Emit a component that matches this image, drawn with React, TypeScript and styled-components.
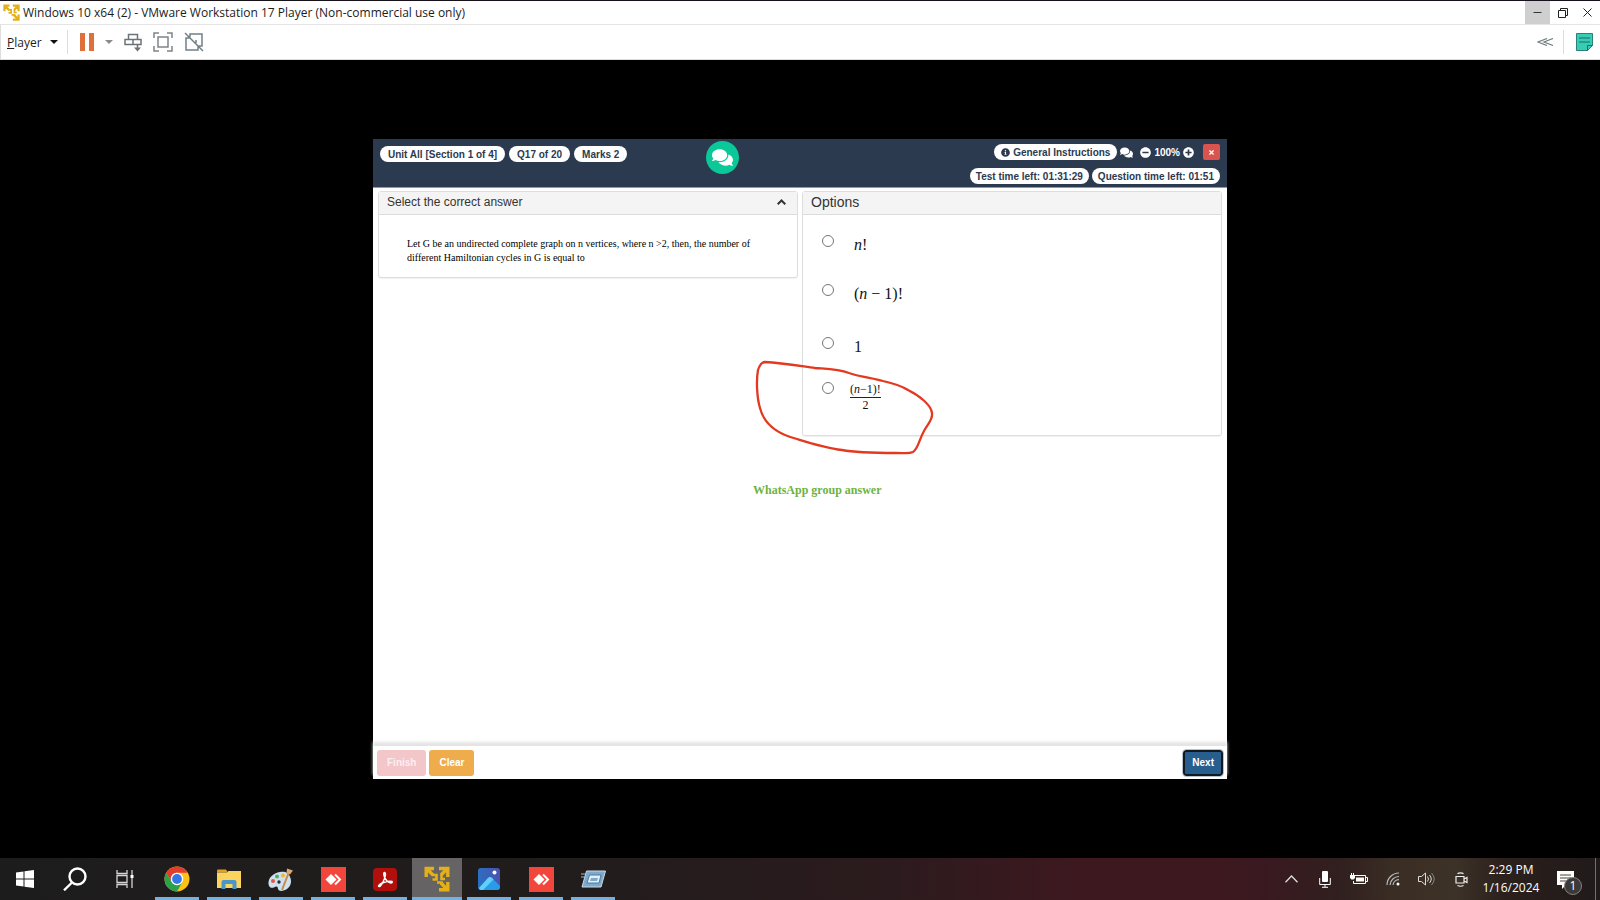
import React from "react";
import styled, { createGlobalStyle } from "styled-components";
import { FaComments, FaInfoCircle, FaMinusCircle, FaPlusCircle, FaTimes } from "react-icons/fa";

const GlobalStyle = createGlobalStyle`
  * { box-sizing: border-box; }
  html, body, #root { height: 100%; }
  body { margin: 0; background: #000; }
  button { font: inherit; padding: 0; border: 0; background: none; color: inherit; }
  svg { display: block; }
`;

const uiFont = `"Open Sans", "Noto Sans", sans-serif`;
const guestFont = `"Liberation Sans", Arial, sans-serif`;
const serifFont = `"Liberation Serif", "Times New Roman", serif`;

const Desktop = styled.div`
  display: flex;
  flex-direction: column;
  min-height: 100%;
  background: #000;
  font-family: ${uiFont};
`;

/* ---------- host window ---------- */

const TitleBar = styled.header`
  display: flex;
  align-items: stretch;
  height: 25px;
  border-top: 1px solid #17121a;
  border-bottom: 1px solid #e4e4e4;
  background: #fff;
`;

const Title = styled.h1`
  display: flex;
  align-items: center;
  gap: 3px;
  flex: 1;
  margin: 0;
  padding-left: 3px;
  font-size: 12px;
  font-weight: 400;
  line-height: 24px;
  color: #1c1c1c;
  white-space: nowrap;
`;

const WindowButton = styled.button<{ $hover?: boolean }>`
  display: flex;
  align-items: center;
  justify-content: center;
  width: 25px;
  background: ${(p) => (p.$hover ? "#cfcfcf" : "transparent")};
`;

const Toolbar = styled.nav`
  display: flex;
  align-items: center;
  height: 35px;
  padding: 0 7px 0 6px;
  border-left: 1px solid #ddd;
  border-bottom: 1px solid #ddd;
  background: #fff;
`;

const PlayerMenu = styled.button`
  display: flex;
  align-items: center;
  gap: 8px;
  font-size: 12px;
  color: #1c1c1c;
`;

const ToolDivider = styled.span`
  width: 1px;
  height: 24px;
  margin: 0 12px 0 9px;
  background: #ddd;
`;

const ToolGroup = styled.div`
  display: flex;
  align-items: center;
  gap: 11px;
`;

const ToolButton = styled.button`
  display: block;
`;

const Spacer = styled.div`
  flex: 1;
`;

const Viewport = styled.main`
  display: flex;
  flex: 1;
  align-items: center;
  justify-content: center;
`;

/* ---------- guest screen ---------- */

const Screen = styled.section`
  position: relative;
  display: flex;
  flex-direction: column;
  width: 854px;
  max-width: 100%;
  min-height: 640px;
  background: #fff;
  font-family: ${guestFont};
`;

const TestHeader = styled.header`
  position: relative;
  display: flex;
  justify-content: space-between;
  align-items: flex-start;
  height: 49px;
  padding: 5px 7px 0;
  border-bottom: 1px solid #7e9cc4;
  background: #2c3a4f;
  font-size: 10px;
  font-weight: 700;
`;

const Pills = styled.div`
  display: flex;
  gap: 4px;
  padding-top: 2px;
`;

const Pill = styled.span`
  display: flex;
  align-items: center;
  gap: 3px;
  height: 16px;
  padding: 0 8px;
  border-radius: 8px;
  background: #fff;
  color: #2c3a4f;
  white-space: nowrap;
`;

const TimePill = styled(Pill)`
  padding: 0 6px;
`;

const InstructionsPill = styled(Pill).attrs({ as: "button" })`
  padding: 0 7px;
`;

const ChatButton = styled.button`
  position: absolute;
  top: 2px;
  left: 333px;
  display: flex;
  align-items: center;
  justify-content: center;
  width: 33px;
  height: 33px;
  border-radius: 50%;
  background: #0bc899;
  color: #fff;
`;

const HeaderRight = styled.div`
  display: flex;
  flex-direction: column;
  align-items: flex-end;
  gap: 8px;
`;

const HeaderRow = styled.div`
  display: flex;
  align-items: center;
  gap: 3px;
  color: #fff;
`;

const Zoom = styled.div`
  display: flex;
  align-items: center;
  gap: 3px;
  margin: 0 6px 0 4px;
`;

const CloseTest = styled.button`
  display: flex;
  align-items: center;
  justify-content: center;
  width: 17px;
  height: 16px;
  border-radius: 2px;
  background: #d9534f;
  color: #fff;
`;

const TestBody = styled.div`
  display: grid;
  grid-template-columns: 1fr 1fr;
  gap: 4px;
  align-items: start;
  flex: 1;
  padding: 3px 5px;
`;

const Panel = styled.section`
  border: 1px solid #ddd;
  border-radius: 3px;
  box-shadow: 0 1px 1px rgba(0, 0, 0, 0.06);
`;

const PanelHeading = styled.h2<{ $large?: boolean }>`
  display: flex;
  align-items: center;
  justify-content: space-between;
  height: 23px;
  margin: 0;
  padding: 0 11px 2px 8px;
  border-bottom: 1px solid #ddd;
  background: #f4f4f4;
  color: #333;
  font-size: ${(p) => (p.$large ? 14 : 12)}px;
  font-weight: 400;
`;

const Question = styled.p`
  margin: 0;
  padding: 22px 28px 12px;
  font-family: ${serifFont};
  font-size: 10px;
  line-height: 14px;
  color: #000;
`;

const Options = styled.div`
  display: grid;
  grid-template-rows: 49px 53px 45px 46px;
  padding: 20px 0 7px 19px;
`;

const Option = styled.label<{ $tight?: boolean }>`
  display: flex;
  align-items: flex-start;
  gap: ${(p) => (p.$tight ? 16 : 20)}px;
`;

const Radio = styled.input`
  appearance: none;
  width: 12px;
  height: 12px;
  margin: 0;
  border: 1px solid #767676;
  border-radius: 50%;
  background: #fff;
`;

const Formula = styled.span`
  padding-top: 1px;
  font-family: ${serifFont};
  font-size: 16px;
  line-height: 18px;
  color: #111;
`;

const Fraction = styled.span`
  display: flex;
  flex-direction: column;
  font-family: ${serifFont};
  font-size: 12px;
  line-height: 14px;
  color: #111;
  text-align: center;
`;

const Numerator = styled.span`
  padding-bottom: 1px;
  border-bottom: 1px solid #222;
`;

const TestFooter = styled.footer`
  display: flex;
  align-items: center;
  gap: 3px;
  height: 33px;
  padding: 0 4px;
  background: #fff;
  box-shadow: 0 -4px 3px #e4e4e4;
`;

const ActionButton = styled.button<{ $tone: string; $faded?: boolean; $focus?: boolean }>`
  height: 26px;
  padding: 0 ${(p) => (p.$focus ? 7 : 9)}px;
  border: ${(p) => (p.$focus ? "2px solid #101820" : "1px solid transparent")};
  border-radius: 3px;
  background: ${(p) => p.$tone};
  background-clip: border-box;
  color: ${(p) => (p.$faded ? "#fdeef0" : "#fff")};
  font-size: 10px;
  font-weight: 700;
  outline: ${(p) => (p.$focus ? "1px solid #b9c2cc" : "none")};
`;

const Markup = styled.svg`
  position: absolute;
  left: 380px;
  top: 219px;
  pointer-events: none;
`;

const MarkupNote = styled.p`
  position: absolute;
  left: 380px;
  top: 344px;
  margin: 0;
  font-family: ${serifFont};
  font-size: 12px;
  font-weight: 700;
  line-height: 14px;
  color: #6db33f;
  white-space: nowrap;
`;

/* ---------- taskbar ---------- */

const Taskbar = styled.footer`
  display: flex;
  align-items: stretch;
  justify-content: space-between;
  height: 42px;
  background: linear-gradient(90deg, #1d1c1c 0%, #221c1c 38%, #2c1b1e 56%, #3e181f 68%, #3e181f 76%, #39191f 79%, #30201f 84%, #3a2d24 87%, #3d3228 91%, #2b201c 94%, #201a1a 100%);
`;

const TaskGroup = styled.div`
  display: flex;
`;

const AppGroup = styled(TaskGroup)`
  padding-left: 1px;
`;

const SystemButton = styled.button`
  display: flex;
  align-items: center;
  justify-content: center;
  width: 50px;
`;

const AppButton = styled.button<{ $active?: boolean }>`
  display: flex;
  align-items: center;
  justify-content: center;
  width: ${(p) => (p.$active ? 50 : 44)}px;
  margin: 0 ${(p) => (p.$active ? 1 : 4)}px;
  border-bottom: 3px solid #76b0de;
  padding-top: 3px;
  background: ${(p) => (p.$active ? "#656363" : "transparent")};
`;

const Tray = styled.div`
  display: flex;
  align-items: center;
  color: #fff;
`;

const TrayButton = styled.button`
  display: flex;
  align-items: center;
  justify-content: center;
  width: 34px;
  height: 42px;
`;

const Clock = styled.time`
  width: 66px;
  font-size: 12px;
  line-height: 18px;
  text-align: center;
`;

const Notice = styled.button`
  position: relative;
  width: 25px;
  height: 26px;
  margin: 2px 13px 0;
`;

const NoticeCount = styled.span`
  position: absolute;
  right: 0;
  bottom: -2px;
  width: 18px;
  height: 18px;
  border: 1px solid #85817f;
  border-radius: 50%;
  background: #3c3939;
  color: #fff;
  font-size: 12px;
  line-height: 16px;
`;

const ShowDesktop = styled.button`
  align-self: stretch;
  width: 5px;
  border-left: 1px solid #77706e;
`;

/* ---------- drawings ---------- */

const VmLogo = ({ size }: { size: number }) => (
  <svg width={size} height={size} viewBox="0 0 26 26" fill="none" stroke="#e3b01c" strokeWidth="3.4">
    <path d="M2.200 11V2.500H10M2.500 2.500 9 9M15 2.500H23.800V11M23.500 2.500 17 9M23.800 16V23.800H15M23.500 23.800 17 17" />
    <path d="M8 9H12.500V13.500H8.500M17.500 8V13H21M13 16.500H17.500V19" strokeWidth="2.600" />
  </svg>
);

const ChromeLogo = () => (
  <svg width="26" height="26" viewBox="0 0 26 26">
    <circle cx="13" cy="13" r="12.500" fill="#fbc116" />
    <path d="M2.200 6.750A12.500 12.500 0 0 1 23.800 6.750H13A6.200 6.200 0 0 0 7.200 11Q6.500 13 7.600 16Z" fill="#e33b2e" />
    <path d="M2.200 6.750 7.600 16 13 19.300 18.400 16 13 25.500A12.500 12.500 0 0 1 2.200 6.750Z" fill="#2da04e" />
    <circle cx="13" cy="13" r="6.200" fill="#fff" />
    <circle cx="13" cy="13" r="4.900" fill="#3478e5" />
  </svg>
);

const FolderIcon = () => (
  <svg width="24" height="21" viewBox="0 0 24 21">
    <path d="M0 1.500Q0 .500 1 .500H9L11 3.500H0Z" fill="#e0a21c" />
    <path d="M0 3.500H10L11.500 2H24V19H0Z" fill="#fcd35f" />
    <path d="M4.500 20V13q0-2 2-2h11q2 0 2 2v7h-4v-5h-7v5Z" fill="#4a96c9" />
  </svg>
);

const PaintIcon = () => (
  <svg width="26" height="25" viewBox="0 0 26 25">
    <path d="M12 5C5 6 0 11 .500 17c.500 5 5 4 6.500 3 2-1 3 0 3 2 1 3 6 2 9 0 4-3 5-8 3-12-1-4-5-6-10-5Z" fill="#cfe0ee" />
    <circle cx="5" cy="14" r="2" fill="#e2574c" />
    <circle cx="9" cy="9.500" r="2" fill="#55ad58" />
    <circle cx="15" cy="8.500" r="2" fill="#f0b53c" />
    <circle cx="11" cy="15" r="1.700" fill="#25313c" />
    <path d="M21 5 14 23" stroke="#c58a50" strokeWidth="2" />
    <path d="M19 1.500 25 3.500 22 7.500 18.500 6Z" fill="#d9a873" />
  </svg>
);

const AnyDeskIcon = () => (
  <svg width="25" height="25" viewBox="0 0 25 25">
    <path d="M0 0H25V25H0Z" fill="#f2463c" />
    <path d="M10 7 15.500 12.500 10 18 4.500 12.500Z" fill="#fff" />
    <path d="M14 7.500 19 12.500 14 17.500" fill="none" stroke="#fff" strokeWidth="2" />
  </svg>
);

const AcrobatIcon = () => (
  <svg width="24" height="23" viewBox="0 0 24 23">
    <rect width="24" height="23" rx="4" fill="#b10f0b" />
    <path d="M5.500 18C7 15 15 12.500 19 13.500 20 15 17 16 14 13 11 10 10 5 11.500 4.500 13.500 5 12 10 10 14 8 18 6 19.500 5.500 18Z" fill="none" stroke="#fff" strokeWidth="1.500" />
  </svg>
);

const PhotosIcon = () => (
  <svg width="22" height="22" viewBox="0 0 22 22">
    <defs>
      <linearGradient id="sky" x1="0" y1="0" x2="1" y2="0">
        <stop offset="0" stopColor="#2a6fc2" />
        <stop offset="1" stopColor="#4d51b0" />
      </linearGradient>
    </defs>
    <rect width="22" height="22" rx="3" fill="url(#sky)" />
    <path d="M1 20 10 10q2-2 4 0l8 8v1q0 3-3 3H3q-1.500 0-2-2Z" fill="#2a9be8" />
    <path d="M1 20 10 10q2-2 4 0l1.500 1.500L5 22H3q-1.500 0-2-2Z" fill="#5fd0f7" />
    <circle cx="16.500" cy="4.500" r="2" fill="#fff" />
  </svg>
);

const RunIcon = () => (
  <svg width="25" height="18" viewBox="0 0 25 18">
    <path d="M5.500 1H24.500L20 17H1Z" fill="#7fa9c9" stroke="#c5dbea" />
    <path d="M8.500 5H20L18 13H6Z" fill="#e3eef6" stroke="#4b7ca3" />
    <path d="M10 8h7l-1 3H9Z" fill="#7fa9c9" />
    <path d="M0 4h5M0 7h4" stroke="#9fbdd3" />
  </svg>
);

const apps = [
  { name: "Google Chrome", icon: <ChromeLogo /> },
  { name: "File Explorer", icon: <FolderIcon /> },
  { name: "Paint", icon: <PaintIcon /> },
  { name: "AnyDesk", icon: <AnyDeskIcon /> },
  { name: "Adobe Acrobat", icon: <AcrobatIcon /> },
  { name: "VMware Player", icon: <VmLogo size={26} />, active: true },
  { name: "Photos", icon: <PhotosIcon /> },
  { name: "AnyDesk session", icon: <AnyDeskIcon /> },
  { name: "Run", icon: <RunIcon /> },
];

const options = [
  { id: "a", formula: <Formula><i>n</i>!</Formula> },
  { id: "b", formula: <Formula>(<i>n</i> − 1)!</Formula> },
  { id: "c", formula: <Formula>1</Formula> },
  { id: "d", tight: true, formula: <Fraction><Numerator>(<i>n</i>−1)!</Numerator><span>2</span></Fraction> },
];

export default function App() {
  return (
    <Desktop>
      <GlobalStyle />
      <TitleBar>
        <Title><VmLogo size={17} />Windows 10 x64 (2) - VMware Workstation 17 Player (Non-commercial use only)</Title>
        <WindowButton $hover aria-label="Minimize">
          <svg width="9" height="9" stroke="#333"><path d="M0.500 4.500h8" /></svg>
        </WindowButton>
        <WindowButton aria-label="Restore">
          <svg width="10" height="10" fill="none" stroke="#222"><path d="M.500 2.500h7v7h-7ZM2.500 2.500v-2h7v7h-2" /></svg>
        </WindowButton>
        <WindowButton aria-label="Close">
          <svg width="9" height="9" stroke="#222"><path d="M.500.500l8 8M8.500.500l-8 8" /></svg>
        </WindowButton>
      </TitleBar>
      <Toolbar>
        <PlayerMenu>
          <span><u>P</u>layer</span>
          <svg width="8" height="4"><path d="M0 0h8L4 4Z" fill="#111" /></svg>
        </PlayerMenu>
        <ToolDivider />
        <ToolGroup>
          <ToolButton aria-label="Pause">
            <svg width="14" height="18"><path d="M0 0h5v18H0ZM9 0h5v18H9Z" fill="#e0703a" /></svg>
          </ToolButton>
          <ToolButton aria-label="Power options">
            <svg width="8" height="4"><path d="M0 0h8L4 4Z" fill="#8a8a8a" /></svg>
          </ToolButton>
          <ToolButton aria-label="Send Ctrl+Alt+Del">
            <svg width="18" height="19" fill="none" stroke="#6b7378" strokeWidth="1.500"><path d="M4.500 6.500v-5h9v5M1 6.500h16v5H1ZM9 6.500v5M13.500 11v5" /><path d="M10 14.500h7l-3.500 4Z" fill="#6b7378" stroke="none" /></svg>
          </ToolButton>
          <ToolButton aria-label="Full screen">
            <svg width="20" height="20" fill="none" stroke="#7d8488" strokeWidth="1.500"><path d="M1 6V1h5M14 1h5v5M19 14v5h-5M6 19H1v-5M5 5h10v10H5Z" /></svg>
          </ToolButton>
          <ToolButton aria-label="Unity mode">
            <svg width="20" height="20" fill="none" stroke="#6f8087" strokeWidth="1.500"><path d="M6 5V2h12v12h-4M6 6H2v12h12v-4M12 8v3M1 1l18 18" /></svg>
          </ToolButton>
        </ToolGroup>
        <Spacer />
        <ToolButton aria-label="Collapse toolbar">
          <svg width="17" height="8" fill="none" stroke="#6f7c82" strokeWidth="1.200"><path d="M10 .500 1 4l9 3.500M16 .500 7 4l9 3.500" /></svg>
        </ToolButton>
        <ToolDivider />
        <ToolButton aria-label="Manage notes">
          <svg width="17" height="18"><path d="M.500.500h16v12l-5 5H.500Z" fill="#35cdb6" stroke="#2e7f77" /><path d="M3 5h11M3 9h11M11.500 17.500v-5h5" fill="none" stroke="#23685f" /></svg>
        </ToolButton>
      </Toolbar>

      <Viewport>
        <Screen>
          <TestHeader>
            <Pills>
              <Pill>Unit All [Section 1 of 4]</Pill>
              <Pill>Q17 of 20</Pill>
              <Pill>Marks 2</Pill>
            </Pills>
            <ChatButton aria-label="Chat"><FaComments size={21} /></ChatButton>
            <HeaderRight>
              <HeaderRow>
                <InstructionsPill><FaInfoCircle size={9} />General Instructions</InstructionsPill>
                <FaComments size={13} />
                <Zoom><FaMinusCircle size={11} />100%<FaPlusCircle size={11} /></Zoom>
                <CloseTest aria-label="Close test"><FaTimes size={7} /></CloseTest>
              </HeaderRow>
              <HeaderRow>
                <TimePill>Test time left: 01:31:29</TimePill>
                <TimePill>Question time left: 01:51</TimePill>
              </HeaderRow>
            </HeaderRight>
          </TestHeader>
          <TestBody>
            <Panel>
              <PanelHeading>
                Select the correct answer
                <svg width="9" height="6" fill="none" stroke="#333" strokeWidth="2"><path d="M.700 5.300 4.500 1.500 8.300 5.300" /></svg>
              </PanelHeading>
              <Question>
                Let G be an undirected complete graph on n vertices, where n &gt;2, then, the number of<br />
                different Hamiltonian cycles in G is equal to
              </Question>
            </Panel>
            <Panel>
              <PanelHeading $large>Options</PanelHeading>
              <Options>
                {options.map((o) => (
                  <Option key={o.id} $tight={o.tight}>
                    <Radio type="radio" name="answer" value={o.id} />
                    {o.formula}
                  </Option>
                ))}
              </Options>
            </Panel>
          </TestBody>
          <TestFooter>
            <ActionButton $tone="#f3c6ca" $faded>Finish</ActionButton>
            <ActionButton $tone="#eeac4d">Clear</ActionButton>
            <Spacer />
            <ActionButton $tone="#285e8e" $focus>Next</ActionButton>
          </TestFooter>
          <Markup width="184" height="100" viewBox="753 358 184 100" fill="none" stroke="#e2391f" strokeWidth="2.300" strokeLinejoin="round">
            <path d="M765 362C782 363 800 366 815 368 828 369 838 369 849 373 861 377 872 378 883 381 892 383 900 385 908 390 920 396 931 405 932 413 933 420 928 423 924 431 919 440 918 449 913 452 909 454 905 453 896 453 879 453 857 453 842 450 826 448 810 443 797 439 777 434 764 424 760 408 757 398 756 381 758 370 760 364 762 362 765 362Z" />
          </Markup>
          <MarkupNote>WhatsApp group answer</MarkupNote>
        </Screen>
      </Viewport>

      <Taskbar>
        <TaskGroup>
          <SystemButton aria-label="Start">
            <svg width="18" height="18" fill="#fff"><path d="M0 2.500 7.500 1.500V8.500H0ZM8.500 1.300 18 0V8.500H8.500ZM0 9.500H7.500V16.500L0 15.500ZM8.500 9.500H18V18L8.500 16.700Z" /></svg>
          </SystemButton>
          <SystemButton aria-label="Search">
            <svg width="24" height="24" fill="none" stroke="#fff" strokeWidth="2.400"><circle cx="14.500" cy="9.500" r="8" /><path d="M9 15.500 1 23.300" /></svg>
          </SystemButton>
          <SystemButton aria-label="Task view">
            <svg width="18" height="18" fill="none" stroke="#d5d5d5" strokeWidth="1.300"><path d="M1 0v3.500h10V0M1 5.500h10v7H1ZM1 18v-3.500h10V18M16 0v18" /><path d="M14.500 5h3v3h-3Z" fill="#fff" stroke="none" /></svg>
          </SystemButton>
          <AppGroup>
            {apps.map((a) => (
              <AppButton key={a.name} aria-label={a.name} $active={a.active}>{a.icon}</AppButton>
            ))}
          </AppGroup>
        </TaskGroup>
        <Tray>
          <TrayButton aria-label="Hidden icons">
            <svg width="13" height="8" fill="none" stroke="#ddd" strokeWidth="1.300"><path d="M.500 7.300 6.500 1 12.500 7.300" /></svg>
          </TrayButton>
          <TrayButton aria-label="Microphone">
            <svg width="12" height="17" fill="none" stroke="#fff"><rect x="3" y="0" width="6" height="11" rx="1" fill="#fff" stroke="none" /><path d="M.700 7v6.500h10.600V7M6 13v3M3 16.300h6" /></svg>
          </TrayButton>
          <TrayButton aria-label="Battery">
            <svg width="18" height="12" fill="none" stroke="#fff"><path d="M4 2.500h11.500v8H3.500V8M16 4.500h1.500v4H16" /><path d="M6 4.500h8v4H6ZM0 2h5v3L3.500 6.500h-2L0 5Z" fill="#fff" stroke="none" /><path d="M1.500 0v2M3.500 0v2" /></svg>
          </TrayButton>
          <TrayButton aria-label="Wi-Fi">
            <svg width="14" height="14" fill="none" stroke="#bbb" strokeWidth="1.200"><path d="M1 13A12 12 0 0 1 13 1M4 13A9 9 0 0 1 13 4.500M7 13A6 6 0 0 1 13 7.700" /><circle cx="12" cy="12" r="1.500" fill="#fff" stroke="none" /></svg>
          </TrayButton>
          <TrayButton aria-label="Volume">
            <svg width="18" height="14" fill="none" stroke="#ddd"><path d="M.500 4.500h3l4-3.500v12l-4-3.500h-3ZM9.500 4.500q2 2.500 0 5M11.500 3q3.500 4 0 8" /><path d="M13.500 1q5.500 6 0 12" stroke="#8a8480" /></svg>
          </TrayButton>
          <TrayButton aria-label="Meet now">
            <svg width="13" height="15" fill="none" stroke="#eee" strokeWidth="1.200"><path d="M1 4.500h8v6.500H1ZM9 7l3-1.500v5L9 9M2.500 1.600q3-1.500 6 0M2.500 13.500q3 1.500 6 0" /></svg>
          </TrayButton>
          <Clock>2:29 PM<br />1/16/2024</Clock>
          <Notice aria-label="Notifications">
            <svg width="18" height="18"><path d="M0 0h17v14H9l-4 4v-4H0Z" fill="#fff" /><path d="M3 4h11M3 7h11M3 10h8" stroke="#4a403c" /></svg>
            <NoticeCount>1</NoticeCount>
          </Notice>
          <ShowDesktop aria-label="Show desktop" />
        </Tray>
      </Taskbar>
    </Desktop>
  );
}
